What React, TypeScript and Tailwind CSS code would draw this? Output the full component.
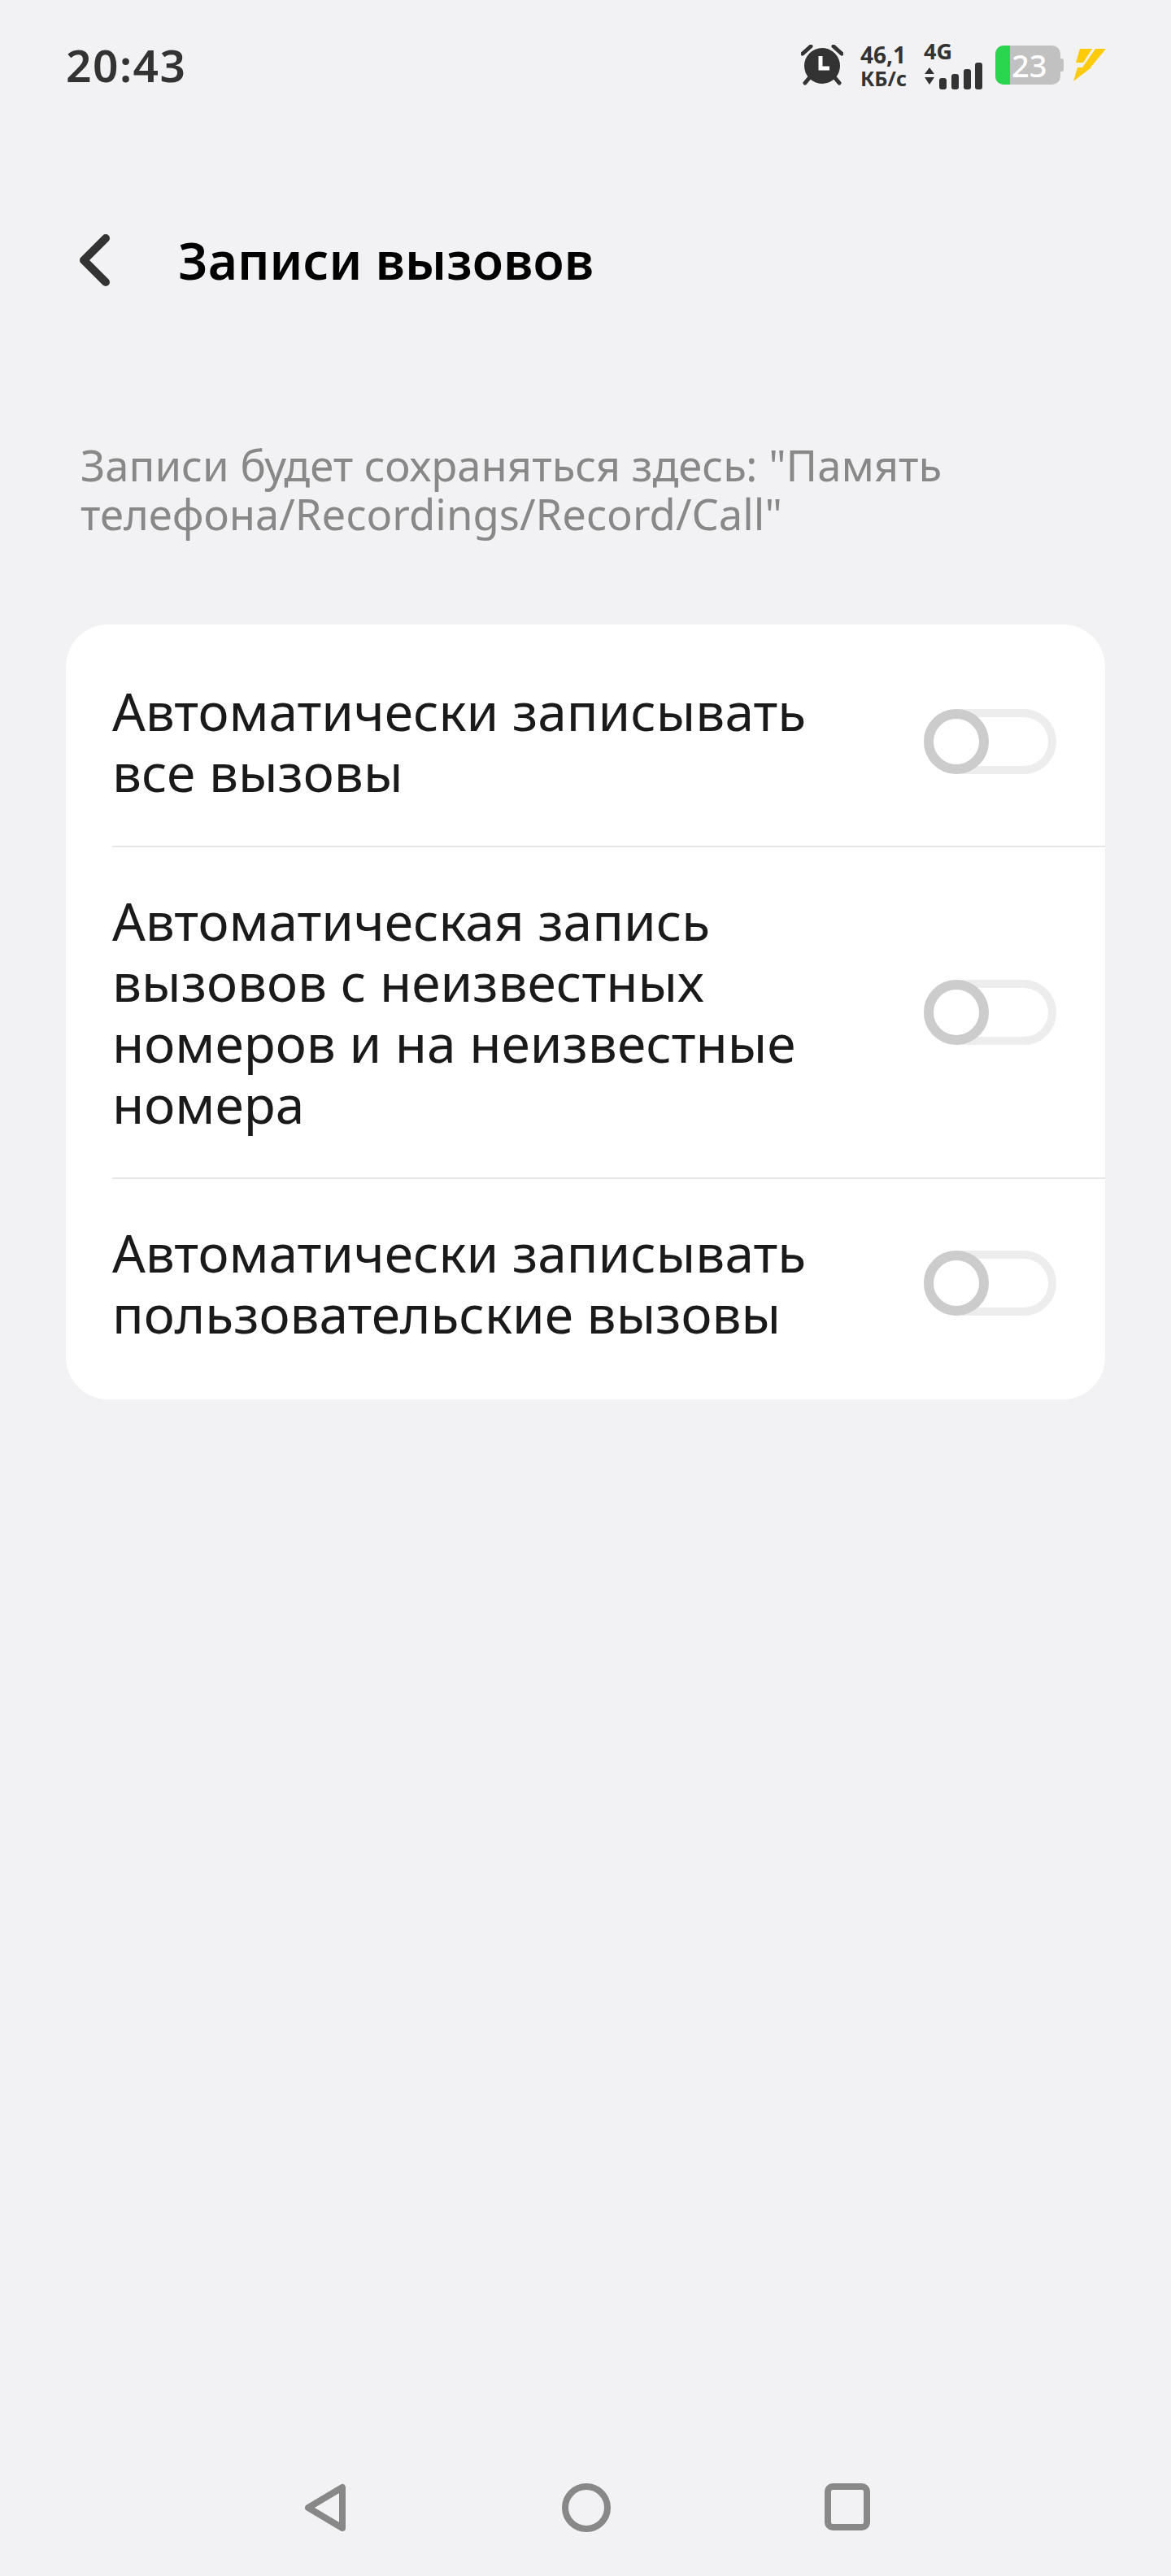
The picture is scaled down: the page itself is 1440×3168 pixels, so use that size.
const Toggle = () => {
  return (
    <div className="relative h-[80px] w-[163px] shrink-0 rounded-full border-[10px] border-[#ededed] bg-white">
      <div className="absolute left-[-10px] top-[-10px] h-[80px] w-[80px] rounded-full border-[12px] border-[#cccccc] bg-white" />
    </div>
  );
};

const rows = [
  {
    id: "all",
    lines: ["Автоматически записывать", "все вызовы"],
  },
  {
    id: "unknown",
    lines: ["Автоматическая запись", "вызовов с неизвестных", "номеров и на неизвестные", "номера"],
  },
  {
    id: "custom",
    lines: ["Автоматически записывать", "пользовательские вызовы"],
  },
];

const StatusBar = () => {
  return (
    <div className="flex h-[160px] items-center pl-[81px] pr-[80px] text-[#333333]">
      <span className="mb-[2px] text-[55px] font-semibold leading-none tracking-[1.5px]">20:43</span>
      <div className="ml-auto flex items-center">
        <svg width="52" height="50" viewBox="0 0 52 50" fill="#333333">
          <path d="M2 11 12 2" stroke="#333333" strokeWidth="5" strokeLinecap="round" />
          <path d="M50 11 40 2" stroke="#333333" strokeWidth="5" strokeLinecap="round" />
          <path d="M10 41 5 47M42 41l5 6" stroke="#333333" strokeWidth="5" strokeLinecap="round" />
          <circle cx="26" cy="26" r="22" />
          <path d="M24 14v15h11" fill="none" stroke="#ffffff" strokeWidth="5" />
        </svg>
        <div className="ml-[21px] mt-[4px] flex w-[56px] flex-col whitespace-nowrap text-[28px] font-bold leading-[29px]">
          <span>46,1</span>
          <span className="text-[25px]">КБ/с</span>
        </div>
        <div className="ml-[22px] flex w-[74px] flex-col">
          <span className="text-[27px] font-bold leading-[26px]">4G</span>
          <svg className="mt-[1px]" width="74" height="34" viewBox="0 0 74 34" fill="#333333">
            <path d="M1 14 7 6l6 8zM1 18h12l-6 9z" />
            <rect x="19" y="19" width="9" height="14" rx="3" />
            <rect x="34" y="14" width="9" height="19" rx="3" />
            <rect x="49" y="8" width="9" height="25" rx="3" />
            <rect x="63" y="0" width="9" height="33" rx="3" />
          </svg>
        </div>
        <div className="ml-[14px] flex items-center">
          <div className="flex h-[48px] w-[80px] rounded-[10px] bg-[#c1c1c1]">
            <div className="h-full w-[18px] rounded-l-[10px] bg-[#2bd64f]" />
            <span className="ml-[2px] text-[38px] font-medium leading-[48px] text-white">23</span>
          </div>
          <div className="h-[16px] w-[4px] rounded-r-[3px] bg-[#c1c1c1]" />
        </div>
        <svg className="ml-[12px]" width="40" height="42" viewBox="0 0 40 42" fill="#fdcb0a">
          <path d="M8 1h15L12 18H3zM27 1h13L21 24H11zM5 24h17L0 41z" />
        </svg>
      </div>
    </div>
  );
};

const NavBar = () => {
  return (
    <div className="mt-auto flex h-[114px] items-start justify-center pl-[4px]">
      <svg width="60" height="60" viewBox="0 0 60 60" fill="none" stroke="#888888" strokeWidth="8" strokeLinejoin="round">
        <path d="M46 5v50L4 30z" />
      </svg>
      <svg className="ml-[256px]" width="60" height="60" viewBox="0 0 60 60" fill="none" stroke="#888888" strokeWidth="8">
        <circle cx="30" cy="30" r="26" />
      </svg>
      <svg className="ml-[263px]" width="56" height="58" viewBox="0 0 56 58" fill="none" stroke="#888888" strokeWidth="8">
        <rect x="4" y="4" width="48" height="50" rx="6" />
      </svg>
    </div>
  );
};

export default function App() {
  return (
    <div className="flex h-[3168px] w-[1440px] flex-col bg-[#f2f2f4] font-['Noto_Sans',sans-serif]">
      <StatusBar />
      <div className="mt-[120px] flex items-center pl-[98px]">
        <svg width="38" height="64" viewBox="0 0 38 64" fill="none" stroke="#333333" strokeWidth="10" strokeLinecap="round" strokeLinejoin="round">
          <path d="M32 5 5 32l27 27" />
        </svg>
        <h1 className="ml-[83px] text-[62.5px] font-semibold leading-[80px] text-black">Записи вызовов</h1>
      </div>
      <p className="mb-[106px] ml-[99px] mt-[182px] text-[52.6px] leading-[60px] text-[#888888]">
        Записи будет сохраняться здесь: "Память
        <br />
        телефона/Recordings/Record/Call"
      </p>
      <div className="mx-[81px] rounded-[52px] bg-white pb-[15px] pt-[16px]">
        {rows.map((row, i) => (
          <div
            key={row.id}
            className={
              i < rows.length - 1
                ? "ml-[57px] flex items-center justify-between border-b-2 border-[#e6e6e6] py-[53px] pr-[60px]"
                : "ml-[57px] flex items-center justify-between py-[53px] pr-[60px]"
            }
          >
            <div className="text-[64px] leading-[75px] text-[#1a1a1a]">
              {row.lines.map((line) => (
                <div key={line} className="whitespace-nowrap">
                  {line}
                </div>
              ))}
            </div>
            <Toggle />
          </div>
        ))}
      </div>
      <NavBar />
    </div>
  );
}
